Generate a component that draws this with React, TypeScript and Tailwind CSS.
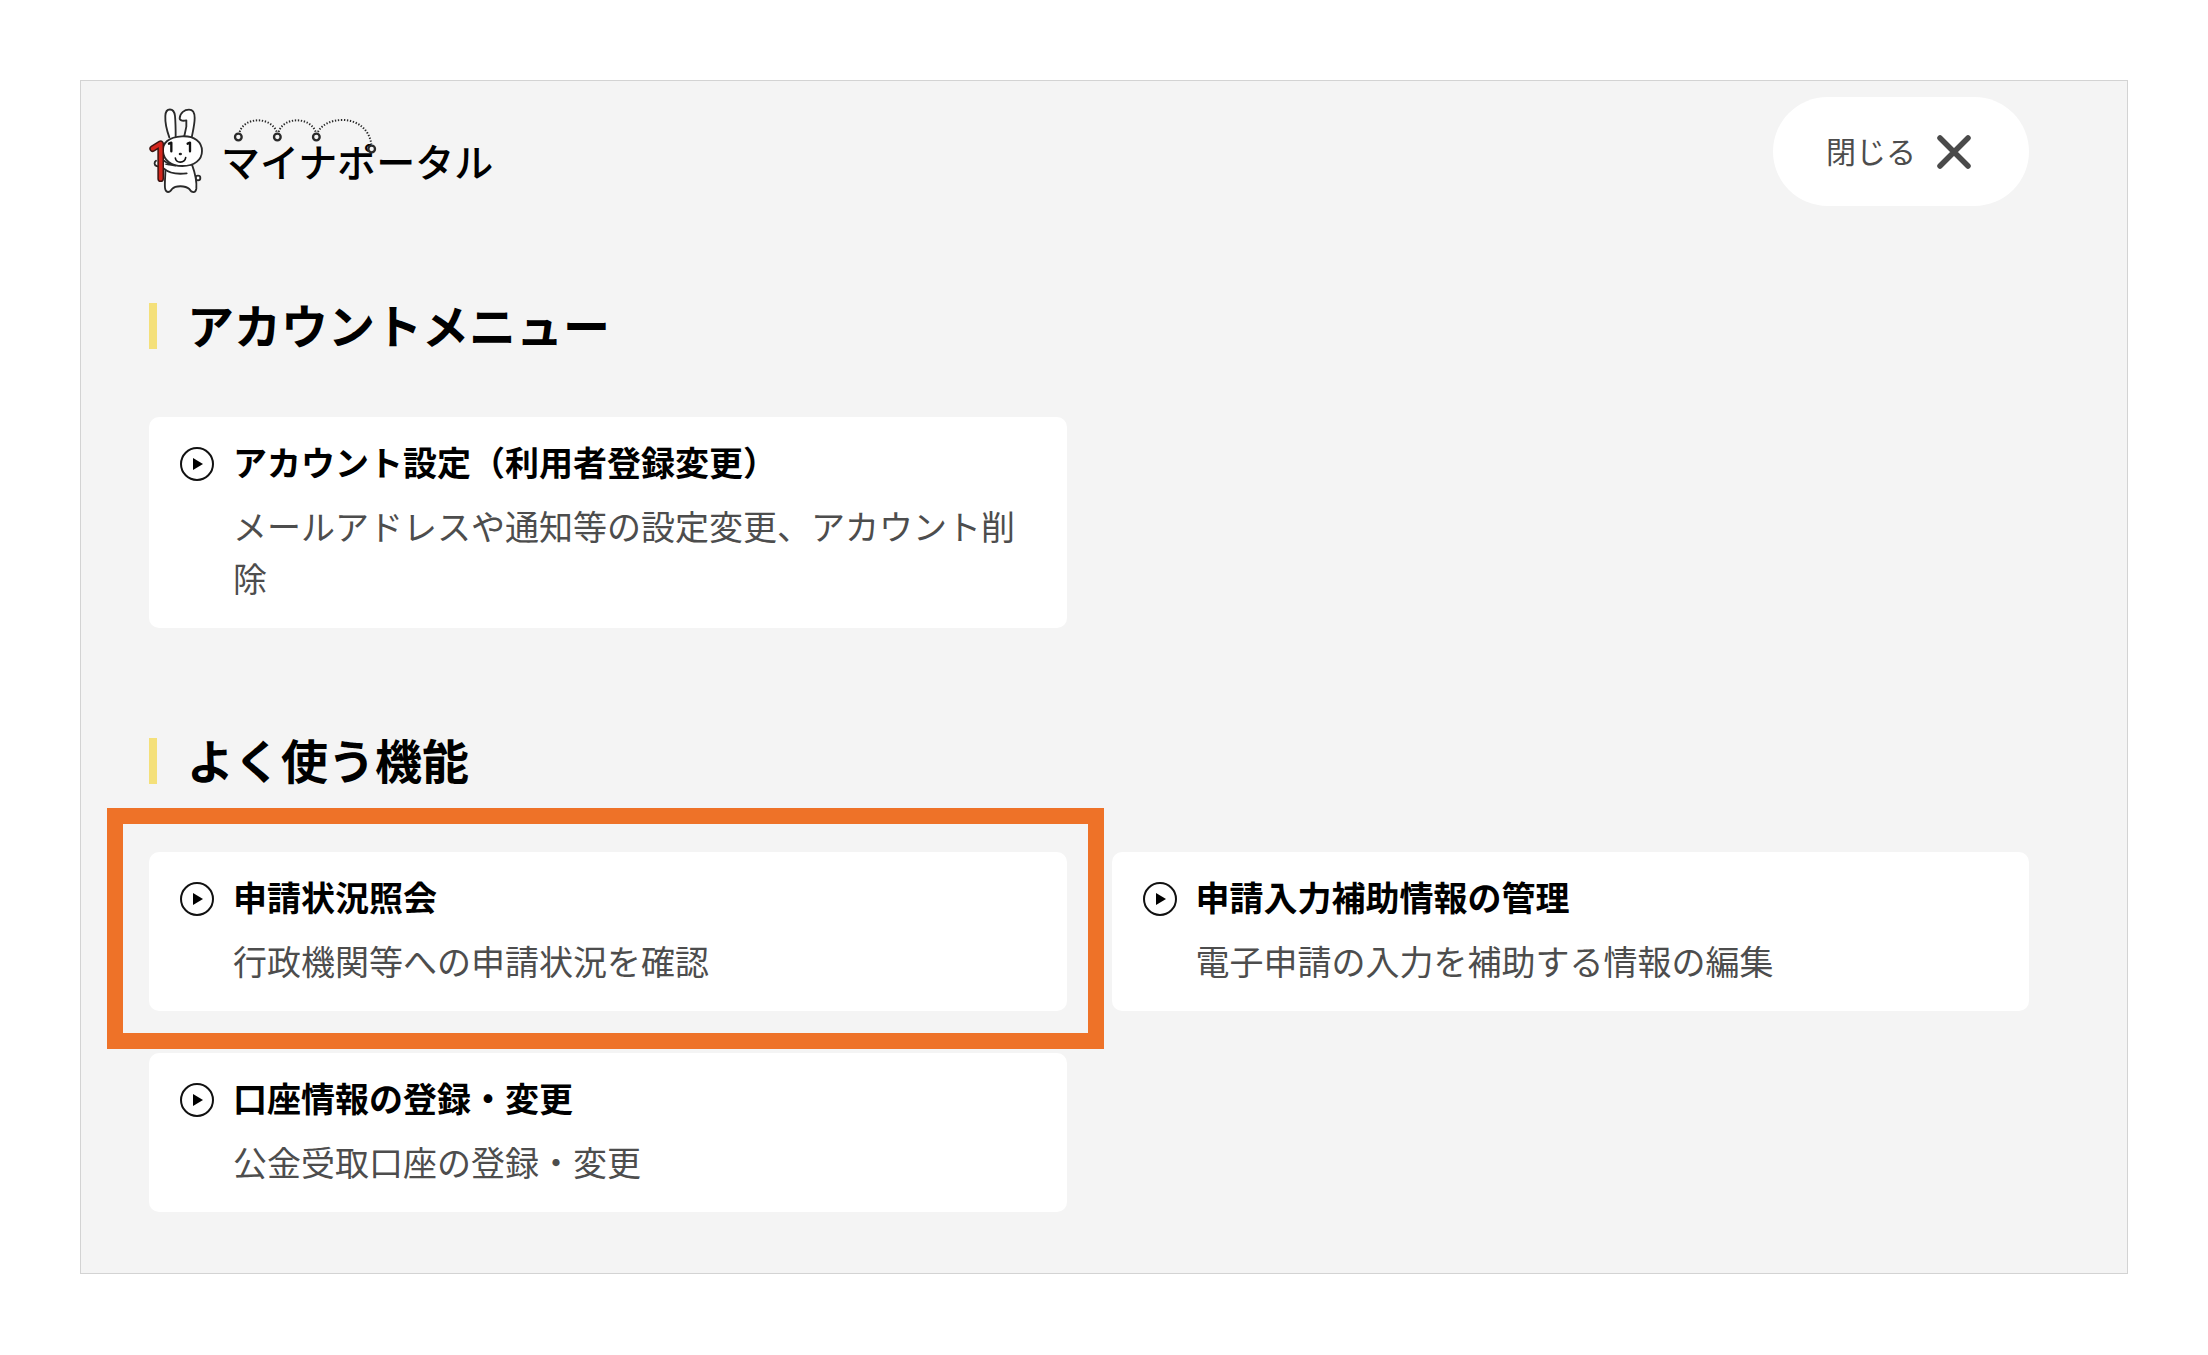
type MenuItem = {
  title: string;
  description: string;
  highlighted?: boolean;
};

type MenuSection = {
  id: string;
  heading: string;
  items: MenuItem[];
};

const sections: MenuSection[] = [
  {
    id: "account",
    heading: "アカウントメニュー",
    items: [
      {
        title: "アカウント設定（利用者登録変更）",
        description: "メールアドレスや通知等の設定変更、アカウント削除",
      },
    ],
  },
  {
    id: "frequent",
    heading: "よく使う機能",
    items: [
      {
        title: "申請状況照会",
        description: "行政機関等への申請状況を確認",
        highlighted: true,
      },
      {
        title: "申請入力補助情報の管理",
        description: "電子申請の入力を補助する情報の編集",
      },
      {
        title: "口座情報の登録・変更",
        description: "公金受取口座の登録・変更",
      },
    ],
  },
];

function Rabbit() {
  return (
    <svg viewBox="267 114 168 264" className="h-[88px] w-14 shrink-0" aria-hidden="true">
      <g fill="#fff" stroke="#2a2a2a" strokeWidth="5.5" strokeLinejoin="round" strokeLinecap="round">
        {/* ears */}
        <path d="M328 202C320 180 315 158 316 138C317 112 342 112 345 138C347 160 347 182 347 200" />
        <path d="M373 198L379 170V151C371 153 359 153 359 145C360 128 374 119 387 119C400 119 404 130 404 144C404 163 399 182 395 203" />
        {/* tail and body */}
        <circle cx="414" cy="324" r="7" />
        <path d="M316 284C318 305 313 335 315 354C317 370 329 369 336 357C346 346 376 346 388 357C395 369 407 370 409 356C411 332 404 306 396 284Z" />
        {/* head */}
        <path d="M366 199C403 197 426 215 426 243C426 270 403 288 367 288C333 288 311 270 309 244C307 219 325 201 366 199Z" />
        {/* arms */}
        <path d="M288 272C282 276 282 286 290 288L312 296C330 312 355 313 380 310" />
        <path d="M312 272C326 282 338 286 346 287" fill="none" />
      </g>
      <g fill="none" stroke="#111" strokeWidth="5" strokeLinecap="round" strokeLinejoin="round">
        <path d="M327 221L334 218V244" strokeWidth="7" />
        <path d="M383 221L390 218V244" strokeWidth="7" />
        <path d="M346 264C348 280 374 281 377 263" />
      </g>
      <ellipse cx="361" cy="252" rx="5" ry="4" fill="#222" />
      {/* red "1" */}
      <g fill="none" strokeLinecap="round" strokeLinejoin="round">
        <path d="M278 236L302 221V326" stroke="#3a1512" strokeWidth="20" />
        <path d="M278 236L302 221V326" stroke="#d4261d" strokeWidth="11" />
      </g>
    </svg>
  );
}

function Logo() {
  return (
    <a href="#top" className="flex items-center gap-4 text-black">
      <Rabbit />
      <span className="relative pt-5 pb-1 text-[39px] leading-10 font-medium">
        マイナポータル
        <svg
          viewBox="517 144 432 108"
          className="absolute -top-px left-3 h-9 w-36 overflow-visible"
          fill="none"
          stroke="#2a2a2a"
          aria-hidden="true"
        >
          <g strokeWidth="6" strokeDasharray="4 5">
            <path d="M537 183C544 160 568 148 592 148C616 148 640 160 648 183" />
            <path d="M654 183C661 160 685 148 709 148C733 148 757 160 765 183" />
            <path d="M772 183C784 160 812 147 845 147C890 147 925 174 932 219" />
          </g>
          <g strokeWidth="7" fill="#f4f4f4">
            <circle cx="533" cy="198" r="10" />
            <circle cx="650" cy="198" r="10" />
            <circle cx="767" cy="198" r="10" />
            <circle cx="933" cy="234" r="10" />
          </g>
        </svg>
      </span>
    </a>
  );
}

function PlayIcon() {
  return (
    <svg viewBox="0 0 34 34" className="mt-[11px] size-[34px] shrink-0" aria-hidden="true">
      <circle cx="17" cy="17" r="16" fill="none" stroke="#111" strokeWidth="2" />
      <path d="M13 11L23 17L13 23Z" fill="#000" />
    </svg>
  );
}

function MenuCard({ item }: { item: MenuItem }) {
  return (
    <li className="relative">
      <a href="#menu" className="flex h-full gap-[19px] rounded-[10px] bg-white px-[31px] pt-[19px] pb-6">
        <PlayIcon />
        <div className="text-[34px] leading-[52px]">
          <h3 className="font-bold text-black">{item.title}</h3>
          <p className="mt-3 text-[#4d4d4d]">{item.description}</p>
        </div>
      </a>
      {item.highlighted && (
        <div className="pointer-events-none absolute -top-11 -right-[37px] -bottom-[38px] -left-[42px] border-16 border-[#ee7228]" />
      )}
    </li>
  );
}

export default function App() {
  return (
    <div className="bg-white p-20 font-['Noto_Sans_CJK_JP',sans-serif]">
      <div className="border border-[#d3d3d3] bg-[#f4f4f4] pt-4 pr-[98px] pb-[61px] pl-[68px]">
        <header className="flex items-center justify-between">
          <Logo />
          <button
            type="button"
            className="flex h-[109px] items-center gap-[21px] rounded-full bg-white pr-[58px] pl-[53px] text-[30px] text-[#4d4d4d]"
          >
            <span className="pb-[3px]">閉じる</span>
            <svg viewBox="0 0 34 34" className="size-[34px]" aria-hidden="true">
              <path d="M3 3L31 31M31 3L3 31" stroke="#4a4a4a" strokeWidth="5.5" strokeLinecap="round" />
            </svg>
          </button>
        </header>

        <main className="mt-[97px] flex flex-col gap-[110px]">
          {sections.map((section) => (
            <section key={section.id} aria-labelledby={section.id}>
              <h2
                id={section.id}
                className="border-l-8 border-[#f4e07a] pb-1 pl-[30px] text-[47px] leading-[42px] font-bold text-black"
              >
                {section.heading}
              </h2>
              <ul className="mt-[68px] grid grid-cols-2 gap-x-[45px] gap-y-[42px]">
                {section.items.map((item) => (
                  <MenuCard key={item.title} item={item} />
                ))}
              </ul>
            </section>
          ))}
        </main>
      </div>
    </div>
  );
}
